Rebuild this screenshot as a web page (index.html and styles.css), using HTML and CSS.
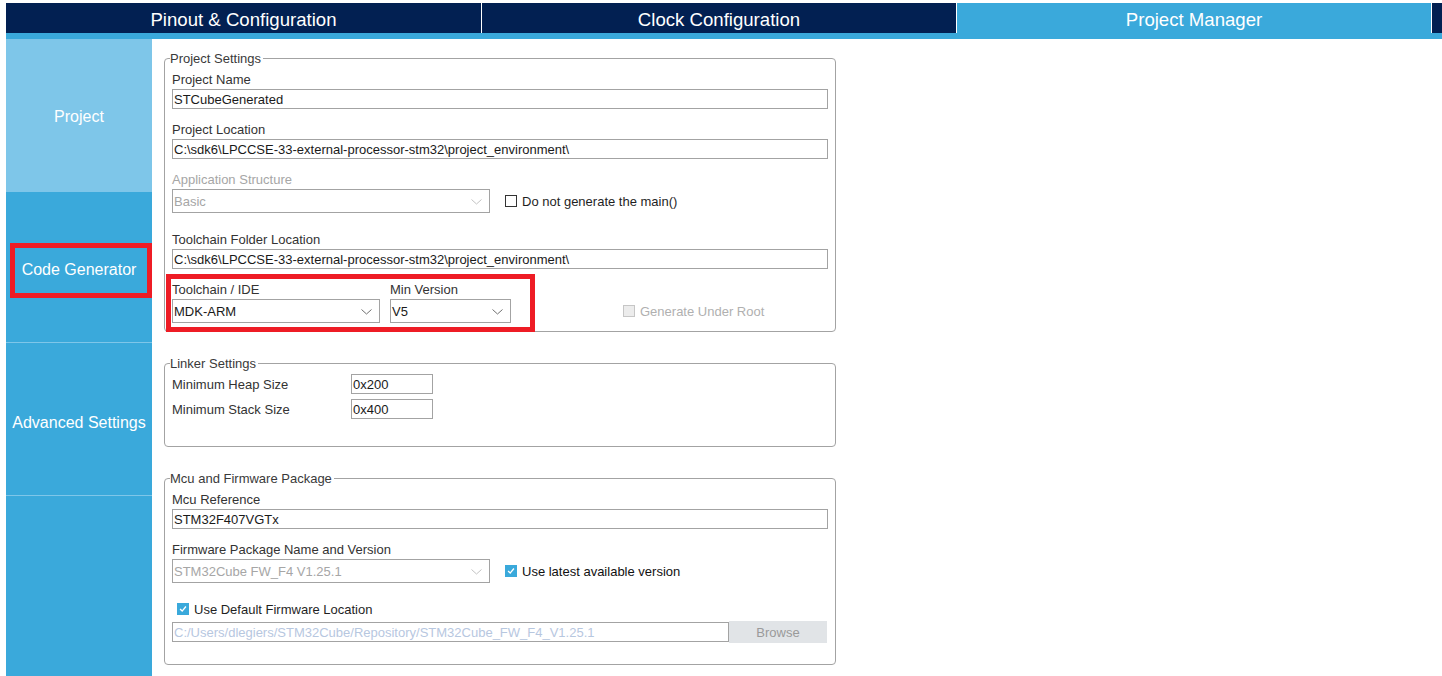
FILE: index.html
```html
<!DOCTYPE html>
<html>
<head>
<meta charset="utf-8">
<title>Project Manager</title>
<link rel="stylesheet" href="styles.css">
</head>
<body>
<div class="page">
  <nav class="tabs">
    <div class="tab first">Pinout &amp; Configuration</div>
    <div class="tab">Clock Configuration</div>
    <div class="tab active">Project Manager</div>
    <div class="tab-rest"></div>
  </nav>
  <div class="strip"></div>
  <div class="main">
    <aside class="sidebar">
      <div class="side-item side-project">Project</div>
      <div class="side-item side-code">Code Generator</div>
      <div class="side-item side-adv">Advanced Settings</div>
      <div class="side-item side-rest"></div>
    </aside>
    <section class="content">
      <fieldset class="fs fs-project">
        <legend>Project Settings</legend>
        <div class="field first">
          <div class="label">Project Name</div>
          <div class="input">STCubeGenerated</div>
        </div>
        <div class="field">
          <div class="label">Project Location</div>
          <div class="input">C:\sdk6\LPCCSE-33-external-processor-stm32\project_environment\</div>
        </div>
        <div class="field tall">
          <div class="label disabled">Application Structure</div>
          <div class="row">
            <div class="select w-318 disabled"><span>Basic</span><svg class="chev" width="11" height="6" viewBox="0 0 11 6"><polyline points="0.5,0.5 5.5,5 10.5,0.5" fill="none" stroke="#c4c4c4" stroke-width="1"/></svg></div>
            <label class="check gap-15"><span class="box"></span><span>Do not generate the main()</span></label>
          </div>
        </div>
        <div class="field">
          <div class="label">Toolchain Folder Location</div>
          <div class="input">C:\sdk6\LPCCSE-33-external-processor-stm32\project_environment\</div>
        </div>
        <div class="field">
          <div class="row top">
            <div class="col w-208">
              <div class="label">Toolchain / IDE</div>
              <div class="select"><span>MDK-ARM</span><svg class="chev" width="11" height="6" viewBox="0 0 11 6"><polyline points="0.5,0.5 5.5,5 10.5,0.5" fill="none" stroke="#707070" stroke-width="1"/></svg></div>
            </div>
            <div class="col w-121 ml-10">
              <div class="label">Min Version</div>
              <div class="select"><span>V5</span><svg class="chev" width="11" height="6" viewBox="0 0 11 6"><polyline points="0.5,0.5 5.5,5 10.5,0.5" fill="none" stroke="#707070" stroke-width="1"/></svg></div>
            </div>
            <label class="check disabled gen-root"><span class="box"></span><span>Generate Under Root</span></label>
          </div>
        </div>
      </fieldset>

      <fieldset class="fs fs-linker">
        <legend>Linker Settings</legend>
        <div class="lrow">
          <div class="llabel">Minimum Heap Size</div>
          <div class="input small">0x200</div>
        </div>
        <div class="lrow">
          <div class="llabel">Minimum Stack Size</div>
          <div class="input small">0x400</div>
        </div>
      </fieldset>

      <fieldset class="fs fs-mcu">
        <legend>Mcu and Firmware Package</legend>
        <div class="field first">
          <div class="label">Mcu Reference</div>
          <div class="input">STM32F407VGTx</div>
        </div>
        <div class="field">
          <div class="label">Firmware Package Name and Version</div>
          <div class="row">
            <div class="select w-318 disabled"><span>STM32Cube FW_F4 V1.25.1</span><svg class="chev" width="11" height="6" viewBox="0 0 11 6"><polyline points="0.5,0.5 5.5,5 10.5,0.5" fill="none" stroke="#c4c4c4" stroke-width="1"/></svg></div>
            <label class="check checked gap-15 dark"><span class="box"><svg width="12" height="12" viewBox="0 0 12 12"><polyline points="2.5,6 5,8.5 9.5,3" fill="none" stroke="#fff" stroke-width="1.6"/></svg></span><span>Use latest available version</span></label>
          </div>
        </div>
        <label class="check checked default-loc"><span class="box"><svg width="12" height="12" viewBox="0 0 12 12"><polyline points="2.5,6 5,8.5 9.5,3" fill="none" stroke="#fff" stroke-width="1.6"/></svg></span><span>Use Default Firmware Location</span></label>
        <div class="row path-row">
          <div class="input path">C:/Users/dlegiers/STM32Cube/Repository/STM32Cube_FW_F4_V1.25.1</div>
          <div class="button">Browse</div>
        </div>
      </fieldset>
    </section>
  </div>
  <div class="mark mark-side"></div>
  <div class="mark mark-tool"></div>
</div>
</body>
</html>
```

FILE: styles.css
```css
* { box-sizing: border-box; }
html, body { margin: 0; padding: 0; background: #fff; }
body {
  font-family: "Liberation Sans", Arial, sans-serif;
  font-size: 13px;
  color: #333;
}
.page {
  position: relative;
  width: 1442px;
  height: 676px;
  padding: 3px 0 0 6px;
  display: flex;
  flex-direction: column;
  overflow: hidden;
}
.tabs {
  display: flex;
  height: 30px;
  background: #022052;
  flex: none;
}
.tab {
  width: 475px;
  border-right: 1px solid #fff;
  color: #fff;
  font-size: 18.6px;
  display: flex;
  align-items: center;
  justify-content: center;
  padding-top: 3px;
}
.tab.first { width: 476px; }
.tab.active { background: #3aa9db; }
.tab-rest { flex: 1; }
.strip { height: 6px; background: #3aa9db; flex: none; }
.main { flex: 1; display: flex; }
.sidebar {
  width: 146px;
  display: flex;
  flex-direction: column;
  background: #3aa9db;
  flex: none;
}
.side-item {
  color: #fff;
  font-size: 16px;
  display: flex;
  align-items: center;
  justify-content: center;
}
.side-project { height: 153px; background: #7ec6e9; padding-top: 2px; }
.side-code { height: 151px; border-bottom: 1px solid #7ec6e9; padding-top: 5px; }
.side-adv { height: 153px; border-bottom: 1px solid #7ec6e9; padding-top: 7px; }
.side-rest { flex: 1; }

.content { padding: 12px 0 0 12px; }
.fs {
  width: 672px;
  margin: 0 0 24px 0;
  padding: 0 7px;
  border: 1px solid #a3a3a3;
  border-radius: 4px;
}
.fs legend {
  padding: 0 2px 0 0;
  margin-left: -2px;
  line-height: 15px;
  color: #3a3a3a;
}
.fs-project { padding-bottom: 8px; }
.fs-linker { padding-top: 3px; padding-bottom: 27px; }
.fs-mcu { padding-bottom: 21px; }

.field { margin-top: 12px; }
.field.first { margin-top: 5px; }
.field.tall { margin-bottom: 18px; }
.field.tall + .field { margin-top: 0; }
.label {
  line-height: 17px;
  height: 16px;
  margin-bottom: 2px;
  color: #333;
}
.label.disabled { color: #a6a6a6; }
.input {
  height: 20px;
  border: 1px solid #a3a3a3;
  padding: 0 1px;
  line-height: 19px;
  color: #1a1a1a;
  white-space: nowrap;
  overflow: hidden;
}
.row { display: flex; align-items: center; }
.row.top { align-items: flex-end; }
.col { display: flex; flex-direction: column; }
.w-318 { width: 318px; }
.w-208 { width: 208px; }
.w-121 { width: 121px; }
.ml-10 { margin-left: 10px; }
.select {
  height: 24px;
  border: 1px solid #a3a3a3;
  padding: 1px 7px 0 1px;
  display: flex;
  align-items: center;
  justify-content: space-between;
  color: #1a1a1a;
}
.select.disabled { color: #a6a6a6; }
.chev { display: block; margin-top: 0; }

.check {
  display: flex;
  align-items: center;
  color: #1f1f1f;
  line-height: 16px;
}
.check > span:last-child { padding-top: 1px; }
.check .box {
  width: 12px;
  height: 12px;
  border: 1px solid #333;
  background: #fff;
  margin-right: 5px;
  display: flex;
  align-items: center;
  justify-content: center;
  flex: none;
}
.check .box svg { display: block; }
.check.checked .box { background: #3aa9db; border-color: #3aa9db; }
.check.disabled { color: #b0b0b0; }
.check.disabled .box { background: #ececec; border-color: #c6c6c6; }
.check.dark { color: #111; }
.gap-15 { margin-left: 15px; }
.gen-root { margin-left: 112px; height: 24px; }
.default-loc { margin-top: 18px; margin-left: 5px; height: 16px; }

.lrow { display: flex; align-items: center; height: 20px; }
.lrow + .lrow { margin-top: 5px; }
.llabel { width: 179px; color: #333; padding-top: 1px; }
.input.small { width: 82px; }

.path-row { margin-top: 4px; height: 22px; }
.input.path { width: 557px; color: #b7c7df; }
.button {
  width: 98px;
  height: 22px;
  background: #e1e4e7;
  color: #9a9a9a;
  display: flex;
  align-items: center;
  justify-content: center;
  padding-top: 1px;
}

.mark {
  position: absolute;
  border: 5px solid #ee1c25;
  pointer-events: none;
}
.mark-side { left: 10px; top: 243px; width: 142px; height: 55px; }
.mark-tool { left: 166px; top: 274px; width: 369px; height: 58px; }
```
